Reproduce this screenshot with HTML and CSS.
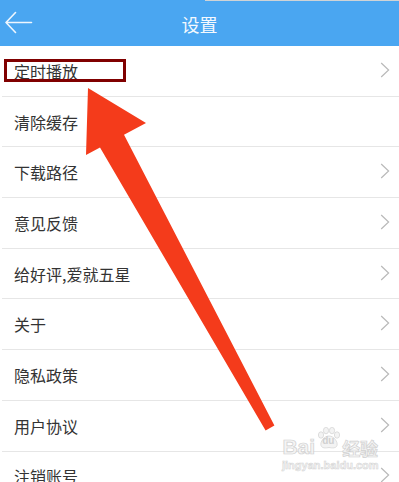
FILE: index.html
```html
<!DOCTYPE html>
<html lang="zh-CN">
<head>
<meta charset="utf-8">
<title>设置</title>
<link rel="stylesheet" href="styles.css">
</head>
<body>
<div class="page">
  <header class="topbar">
    <span class="back">
      <svg width="28" height="24" viewBox="0 0 28 24"><path d="M1 11.5 H26.5 M1 11.5 L10.5 1.5 M1 11.5 L10.5 21.5" fill="none" stroke="#eef6fe" stroke-width="1.6" stroke-linecap="round"/></svg>
    </span>
    <h1 class="title">设置</h1>
  </header>
  <ul class="list">
    <li class="row"><span class="label">定时播放</span><svg class="chev" width="10" height="16" viewBox="0 0 10 16"><path d="M1.2 1 L8.6 8 L1.2 15" fill="none" stroke="#b9b9b9" stroke-width="1.2"/></svg></li>
    <li class="row"><span class="label">清除缓存</span></li>
    <li class="row"><span class="label">下载路径</span><svg class="chev" width="10" height="16" viewBox="0 0 10 16"><path d="M1.2 1 L8.6 8 L1.2 15" fill="none" stroke="#b9b9b9" stroke-width="1.2"/></svg></li>
    <li class="row"><span class="label">意见反馈</span><svg class="chev" width="10" height="16" viewBox="0 0 10 16"><path d="M1.2 1 L8.6 8 L1.2 15" fill="none" stroke="#b9b9b9" stroke-width="1.2"/></svg></li>
    <li class="row"><span class="label">给好评,爱就五星</span><svg class="chev" width="10" height="16" viewBox="0 0 10 16"><path d="M1.2 1 L8.6 8 L1.2 15" fill="none" stroke="#b9b9b9" stroke-width="1.2"/></svg></li>
    <li class="row"><span class="label">关于</span><svg class="chev" width="10" height="16" viewBox="0 0 10 16"><path d="M1.2 1 L8.6 8 L1.2 15" fill="none" stroke="#b9b9b9" stroke-width="1.2"/></svg></li>
    <li class="row"><span class="label">隐私政策</span><svg class="chev" width="10" height="16" viewBox="0 0 10 16"><path d="M1.2 1 L8.6 8 L1.2 15" fill="none" stroke="#b9b9b9" stroke-width="1.2"/></svg></li>
    <li class="row"><span class="label">用户协议</span><svg class="chev" width="10" height="16" viewBox="0 0 10 16"><path d="M1.2 1 L8.6 8 L1.2 15" fill="none" stroke="#b9b9b9" stroke-width="1.2"/></svg></li>
    <li class="row"><span class="label">注销账号</span><svg class="chev" width="10" height="16" viewBox="0 0 10 16"><path d="M1.2 1 L8.6 8 L1.2 15" fill="none" stroke="#b9b9b9" stroke-width="1.2"/></svg></li>
  </ul>

  <div class="highlight"></div>

  <svg class="pointer" width="399" height="482" viewBox="0 0 399 482">
    <polygon points="88,88 146,123 124,134.7 274.4,425.6 265.6,430.4 100,147.5 86,155" fill="#f43b1b"/>
  </svg>

  <div class="watermark">
    <div class="wm-top">
      <span class="wm-bai">Bai</span>
      <span class="wm-paw">
        <svg width="24" height="22" viewBox="0 0 24 22">
          <g fill="#f2f2f2" stroke="#cfcfcf" stroke-width="0.8">
            <ellipse cx="4" cy="8" rx="2.6" ry="3.2"/>
            <ellipse cx="9" cy="3.6" rx="2.6" ry="3.2"/>
            <ellipse cx="15" cy="3.6" rx="2.6" ry="3.2"/>
            <ellipse cx="20" cy="8" rx="2.6" ry="3.2"/>
            <path d="M12 9 C7 9 3 15 4 18.5 C5 21.5 9 21 12 20.5 C15 21 19 21.5 20 18.5 C21 15 17 9 12 9 Z"/>
          </g>
        </svg>
        <span class="wm-du">du</span>
      </span>
      <span class="wm-jy">经验</span>
    </div>
    <div class="wm-url">jingyan.baidu.com</div>
  </div>
</div>
</body>
</html>
```

FILE: styles.css
```css
* { box-sizing: border-box; }
html, body {
  margin: 0;
  padding: 0;
  background: #ffffff;
}
body {
  width: 399px;
  height: 482px;
  overflow: hidden;
  font-family: "Noto Sans CJK SC", "Noto Sans", "Liberation Sans", sans-serif;
}
.page {
  position: relative;
  width: 399px;
  height: 482px;
  overflow: hidden;
}
.topbar {
  position: relative;
  height: 46px;
  background: #4aa6f1;
  display: flex;
  align-items: center;
  justify-content: center;
}
.topbar::before {
  content: "";
  position: absolute;
  top: 0;
  left: 205px;
  right: 0;
  height: 1px;
  background: #cfd3d6;
}
.back {
  position: absolute;
  left: 5px;
  top: 11px;
  display: flex;
}
.title {
  margin: 0;
  font-size: 18px;
  font-weight: 400;
  color: #f4f9fe;
  line-height: 1;
  padding-top: 1px;
}
.list {
  list-style: none;
  margin: 0;
  padding: 0;
}
.row {
  height: 50.7px;
  display: flex;
  align-items: center;
  justify-content: space-between;
  padding: 0 9px 0 14px;
  border-bottom: 1px solid #e6e6e6;
  margin-left: 2px;
}
.row .label {
  margin-left: -2px;
  font-size: 16px;
  color: #333333;
  line-height: 1;
}
.chev {
  display: block;
  flex: none;
  margin-top: -2px;
}
.highlight {
  position: absolute;
  left: 4px;
  top: 59px;
  width: 122px;
  height: 23px;
  border: 3px solid #800000;
}
.pointer {
  position: absolute;
  left: 0;
  top: 0;
  pointer-events: none;
}
.watermark {
  position: absolute;
  left: 282px;
  top: 427px;
  display: flex;
  flex-direction: column;
  align-items: center;
  opacity: 0.85;
}
.wm-top {
  display: flex;
  align-items: flex-end;
  height: 30px;
}
.wm-bai {
  font-family: "Liberation Sans", sans-serif;
  font-weight: 700;
  font-size: 21px;
  line-height: 1;
  color: #f3f3f3;
  -webkit-text-stroke: 0.7px #c8c8c8;
}
.wm-paw {
  position: relative;
  width: 24px;
  height: 22px;
  margin: 0 1px 0 2px;
  align-self: flex-start;
}
.wm-paw svg { display: block; }
.wm-du {
  position: absolute;
  left: 5px;
  top: 9px;
  font-family: "Liberation Sans", sans-serif;
  font-weight: 700;
  font-size: 10px;
  line-height: 1;
  color: #c8c8c8;
}
.wm-jy {
  font-size: 18px;
  line-height: 1;
  font-weight: 700;
  color: #f3f3f3;
  -webkit-text-stroke: 0.7px #c8c8c8;
}
.wm-url {
  margin-top: 3px;
  font-family: "Liberation Sans", sans-serif;
  font-weight: 700;
  font-size: 11px;
  line-height: 1;
  color: #f3f3f3;
  -webkit-text-stroke: 0.5px #cccccc;
}
```
